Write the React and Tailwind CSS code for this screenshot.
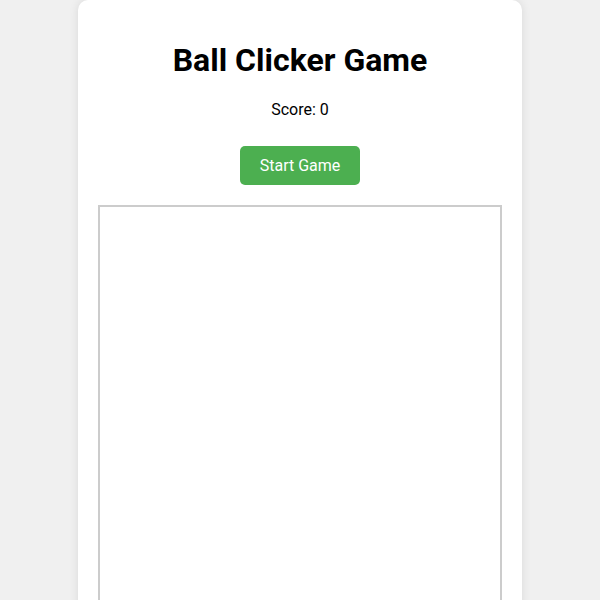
export default function App() {
  return (
    <div className="min-h-screen bg-[#f0f0f0] font-['Roboto',_'Liberation_Sans',_sans-serif] text-black">
      <div className="mx-auto w-[444px] rounded-[10px] bg-white p-5 text-center shadow-[0_0_10px_rgba(0,0,0,0.1)]">
        <h1 className="mt-[21px] text-[32px] font-bold leading-[38px]">Ball Clicker Game</h1>
        <p className="mt-[21px] text-base leading-[19px]">Score: 0</p>
        <button className="mt-[27px] h-[39px] rounded-[5px] bg-[#4CAF50] px-5 text-base text-white">
          Start Game
        </button>
        <div className="mt-5 h-[404px] w-[404px] border-2 border-[#ccc] bg-white"></div>
      </div>
    </div>
  );
}
